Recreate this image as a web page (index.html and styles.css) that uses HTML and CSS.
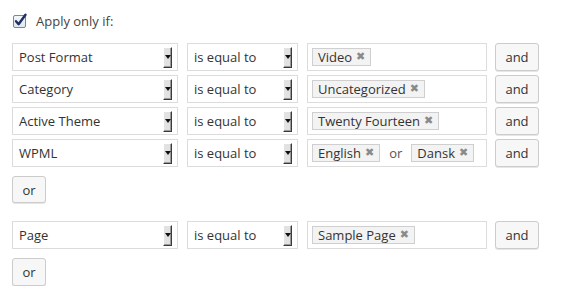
FILE: index.html
```html
<!DOCTYPE html>
<html>
<head>
<meta charset="utf-8">
<link rel="stylesheet" href="styles.css">
</head>
<body>
<div class="rules">
  <label class="apply">
    <svg class="cb" width="16" height="16" viewBox="0 0 16 16">
      <defs><linearGradient id="g" x1="0" y1="0" x2="0" y2="1"><stop offset="0" stop-color="#f4f7fb"/><stop offset="1" stop-color="#dfe7f2"/></linearGradient></defs>
      <rect x="1.5" y="2.5" width="12" height="12" rx="1.5" fill="url(#g)" stroke="#6f86b0"/>
      <path d="M4 8.2 L6.6 11.2 L13.5 1.8" fill="none" stroke="#1d2f63" stroke-width="2.4" stroke-linecap="round" stroke-linejoin="round"/>
    </svg>
    <span>Apply only if:</span>
  </label>

  <div class="group">
    <div class="row">
      <div class="sel sel-param"><span>Post Format</span><i class="arrow"></i></div>
      <div class="sel sel-op"><span>is equal to</span><i class="arrow"></i></div>
      <div class="field"><span class="tag">Video <b>✖</b></span></div>
      <button class="btn and">and</button>
    </div>
    <div class="row">
      <div class="sel sel-param"><span>Category</span><i class="arrow"></i></div>
      <div class="sel sel-op"><span>is equal to</span><i class="arrow"></i></div>
      <div class="field"><span class="tag">Uncategorized <b>✖</b></span></div>
      <button class="btn and">and</button>
    </div>
    <div class="row">
      <div class="sel sel-param"><span>Active Theme</span><i class="arrow"></i></div>
      <div class="sel sel-op"><span>is equal to</span><i class="arrow"></i></div>
      <div class="field"><span class="tag">Twenty Fourteen <b>✖</b></span></div>
      <button class="btn and">and</button>
    </div>
    <div class="row">
      <div class="sel sel-param"><span>WPML</span><i class="arrow"></i></div>
      <div class="sel sel-op"><span>is equal to</span><i class="arrow"></i></div>
      <div class="field"><span class="tag">English <b>✖</b></span><span class="sep">or</span><span class="tag">Dansk <b>✖</b></span></div>
      <button class="btn and">and</button>
    </div>
  </div>
  <button class="btn or">or</button>

  <div class="group second">
    <div class="row">
      <div class="sel sel-param"><span>Page</span><i class="arrow"></i></div>
      <div class="sel sel-op"><span>is equal to</span><i class="arrow"></i></div>
      <div class="field"><span class="tag">Sample Page <b>✖</b></span></div>
      <button class="btn and">and</button>
    </div>
  </div>
  <button class="btn or or2">or</button>
</div>
</body>
</html>
```

FILE: styles.css
```css
html, body {
  margin: 0;
  padding: 0;
  background: #fff;
}
body {
  font-family: "Open Sans", "Liberation Sans", sans-serif;
  font-size: 13px;
  color: #333;
}
.rules {
  padding: 11px 0 0 12px;
  display: flex;
  flex-direction: column;
  align-items: flex-start;
}
.apply {
  display: flex;
  align-items: center;
  height: 20px;
  gap: 8px;
  color: #444;
  font-size: 13px;
}
.cb {
  display: block;
  margin-top: -1px;
}
.group {
  margin-top: 12px;
  display: flex;
  flex-direction: column;
  gap: 4px;
}
.group.second {
  margin-top: 18px;
}
.row {
  display: flex;
  align-items: center;
  gap: 9px;
  height: 28px;
}
.sel {
  box-sizing: border-box;
  height: 28px;
  border: 1px solid #dcdcdc;
  background: #fff;
  display: flex;
  align-items: center;
  justify-content: space-between;
  padding: 0 5px 0 6px;
  color: #333;
}
.sel-param { width: 166px; }
.sel-op { width: 111px; }
.arrow {
  flex: 0 0 9px;
  box-sizing: border-box;
  width: 9px;
  height: 21px;
  margin-top: 1px;
  background: #e2e2e2;
  border-top: 1px solid #fff;
  border-left: 1px solid #fff;
  border-right: 1px solid #3c3c3c;
  border-bottom: 1px solid #3c3c3c;
  box-shadow: inset -1px -1px 0 #9a9a9a;
  position: relative;
}
.arrow::after {
  content: "";
  position: absolute;
  left: 1px;
  top: 7px;
  border-left: 3px solid transparent;
  border-right: 3px solid transparent;
  border-top: 4px solid #111;
}
.field {
  box-sizing: border-box;
  width: 180px;
  height: 28px;
  border: 1px solid #dcdcdc;
  background: #fff;
  display: flex;
  align-items: center;
  padding: 0 4px;
  gap: 6px;
}
.tag {
  box-sizing: border-box;
  height: 18px;
  line-height: 16px;
  border: 1px solid #cfcfcf;
  background: #f3f3f3;
  padding: 0 5px 0 5px;
  color: #333;
  white-space: nowrap;
  display: inline-flex;
  align-items: center;
  gap: 4px;
}
.tag b {
  font-weight: normal;
  font-size: 11px;
  color: #8a8a8a;
  font-family: "DejaVu Sans", sans-serif;
}
.sep {
  color: #555;
  padding: 0 3px;
}
.btn {
  box-sizing: border-box;
  font-family: "Open Sans", "Liberation Sans", sans-serif;
  font-size: 13px;
  color: #333;
  background: #f7f7f7;
  border: 1px solid #cccccc;
  border-radius: 3px;
  box-shadow: 0 1px 0 #e6e6e6;
  padding: 0;
  cursor: pointer;
}
.and {
  width: 44px;
  height: 28px;
  margin-left: -1px;
}
.or {
  width: 34px;
  height: 27px;
  margin-top: 9px;
}
.or2 {
  margin-top: 9px;
  height: 28px;
}
```
